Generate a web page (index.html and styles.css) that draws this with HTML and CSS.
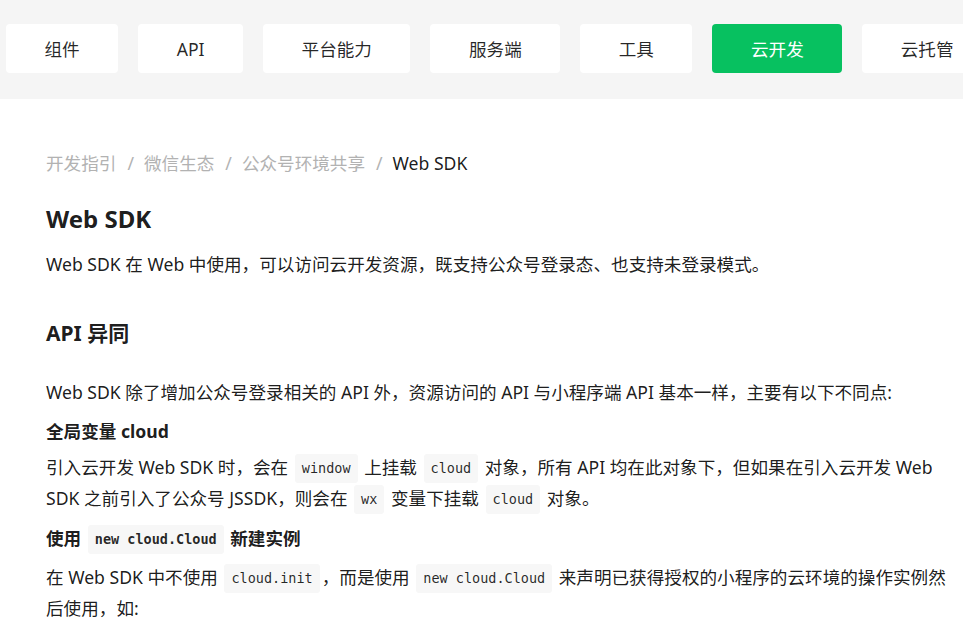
FILE: index.html
```html
<!DOCTYPE html>
<html lang="zh-CN">
<head>
<meta charset="utf-8">
<title>Web SDK</title>
<link rel="stylesheet" href="styles.css">
</head>
<body>
<header class="topnav">
  <nav class="tabs">
    <a class="tab">组件</a>
    <a class="tab">API</a>
    <a class="tab">平台能力</a>
    <a class="tab">服务端</a>
    <a class="tab">工具</a>
    <a class="tab active">云开发</a>
    <a class="tab">云托管</a>
  </nav>
</header>
<main class="content">
  <div class="crumbs">
    <span class="crumb">开发指引</span><span class="sep">/</span><span class="crumb">微信生态</span><span class="sep">/</span><span class="crumb">公众号环境共享</span><span class="sep">/</span><span class="crumb current">Web SDK</span>
  </div>
  <h1 class="title">Web SDK</h1>
  <p class="text intro">Web SDK 在 Web 中使用，可以访问云开发资源，既支持公众号登录态、也支持未登录模式。</p>
  <h2 class="section">API 异同</h2>
  <p class="text lead">Web SDK 除了增加公众号登录相关的 API 外，资源访问的 API 与小程序端 API 基本一样，主要有以下不同点:</p>
  <h3 class="sub first">全局变量 cloud</h3>
  <p class="text after-sub">引入云开发 Web SDK 时，会在 <code class="code">window</code> 上挂载 <code class="code">cloud</code> 对象，所有 API 均在此对象下，但如果在引入云开发 Web SDK 之前引入了公众号 JSSDK，则会在 <code class="code">wx</code> 变量下挂载 <code class="code">cloud</code> 对象。</p>
  <h3 class="sub second">使用 <code class="code bold">new cloud.Cloud</code> 新建实例</h3>
  <p class="text after-sub2">在 Web SDK 中不使用 <code class="code">cloud.init</code>，而是使用 <code class="code">new cloud.Cloud</code> 来声明已获得授权的小程序的云环境的操作实例然后使用，如:</p>
</main>
</body>
</html>
```
FILE: styles.css
```css
* { box-sizing: border-box; }
html, body { margin: 0; padding: 0; background: #fff; }
body {
  font-family: "Noto Sans", "Noto Sans CJK SC", sans-serif;
  color: rgba(0, 0, 0, 0.9);
  width: 963px;
  overflow: hidden;
}
.topnav {
  background: #f5f5f5;
  height: 99px;
  overflow: hidden;
}
.tabs {
  display: flex;
  gap: 20px;
  padding: 24px 0 0 6px;
  white-space: nowrap;
}
.tab {
  flex: none;
  display: flex;
  align-items: center;
  height: 49px;
  padding: 0 38.5px;
  background: #fff;
  border-radius: 4px;
  font-size: 17.6px;
  color: rgba(0, 0, 0, 0.85);
}
.tab.active { background: #07c160; color: #fff; }

.content { padding: 49px 14px 0 46px; }
.crumbs {
  font-size: 17.6px;
  line-height: 30px;
  color: #b2b2b2;
}
.sep { margin: 0 10px 0 11px; }
.crumb.current { color: rgba(0, 0, 0, 0.9); }

.title {
  margin: 23px 0 0;
  font-size: 24px;
  line-height: 36px;
  font-weight: 700;
}
.text {
  margin: 0;
  font-size: 17.6px;
  line-height: 30px;
}
.intro { margin-top: 12px; }
.section {
  margin: 39px 0 0;
  font-size: 21px;
  line-height: 30px;
  font-weight: 700;
}
.lead { margin-top: 29px; }
.sub {
  margin: 0;
  font-size: 17.6px;
  line-height: 30px;
  font-weight: 700;
}
.sub.first { margin-top: 9px; }
.after-sub { margin-top: 6px; }
.sub.second { margin-top: 9px; }
.after-sub2 { margin-top: 8px; }

.code {
  display: inline-block;
  font-family: "DejaVu Sans Mono", "Liberation Mono", monospace;
  font-size: 13.5px;
  line-height: 19px;
  padding: 5px 7px;
  margin: 0 2px;
  background: #f7f7f7;
  border-radius: 3px;
  color: rgba(0, 0, 0, 0.85);
  vertical-align: 1px;
}
.code.bold { font-weight: 700; }
```
